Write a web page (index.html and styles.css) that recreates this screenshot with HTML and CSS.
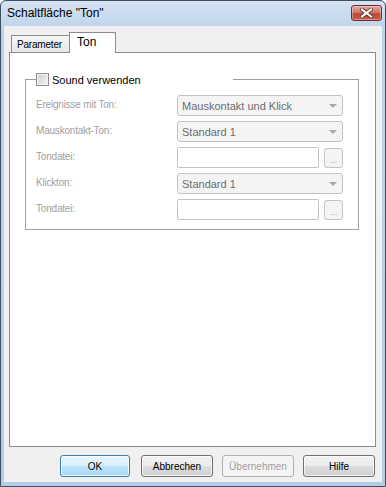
FILE: index.html
```html
<!DOCTYPE html>
<html lang="de">
<head>
    <meta charset="UTF-8">
    <title>Schaltfläche "Ton"</title>
    <link rel="stylesheet" href="styles.css">
</head>
<body>
    <div class="window">
        <div class="titlebar">
            <span class="title">Schaltfläche "Ton"</span>
            <button class="close-btn" type="button">
                <svg width="13" height="10" viewBox="0 0 13 10">
                    <path d="M2 1.5 L11 8.5 M11 1.5 L2 8.5" stroke="#5b3632" stroke-width="4" stroke-linecap="square"/>
                    <path d="M2 1.5 L11 8.5 M11 1.5 L2 8.5" stroke="#ffffff" stroke-width="2.2" stroke-linecap="square"/>
                </svg>
            </button>
        </div>
        <div class="client">
            <div class="tabs">
                <div class="tab">Parameter</div>
                <div class="tab active">Ton</div>
            </div>
            <div class="tab-panel">
                <fieldset class="group">
                    <legend><span class="checkbox"></span>Sound verwenden</legend>
                    <div class="row">
                        <label>Ereignisse mit Ton:</label>
                        <div class="combo">Mauskontakt und Klick<span class="arrow"></span></div>
                    </div>
                    <div class="row">
                        <label>Mauskontakt-Ton:</label>
                        <div class="combo">Standard 1<span class="arrow"></span></div>
                    </div>
                    <div class="row">
                        <label>Tondatei:</label>
                        <div class="file-field">
                            <div class="edit"></div>
                            <button class="browse" type="button">...</button>
                        </div>
                    </div>
                    <div class="row">
                        <label>Klickton:</label>
                        <div class="combo">Standard 1<span class="arrow"></span></div>
                    </div>
                    <div class="row">
                        <label>Tondatei:</label>
                        <div class="file-field">
                            <div class="edit"></div>
                            <button class="browse" type="button">...</button>
                        </div>
                    </div>
                </fieldset>
            </div>
            <div class="button-bar">
                <button class="btn default" type="button">OK</button>
                <button class="btn" type="button">Abbrechen</button>
                <button class="btn" type="button" disabled>Übernehmen</button>
                <button class="btn" type="button">Hilfe</button>
            </div>
        </div>
    </div>
</body>
</html>
```

FILE: styles.css
```css
body {
    margin: 0;
    padding: 0;
    background-color: #ffffff;
    font-family: "Liberation Sans", Arial, sans-serif;
    font-size: 11px;
}

.window {
    box-sizing: border-box;
    width: 386px;
    height: 487px;
    border: 1px solid #3d4d62;
    border-radius: 6px 6px 0 0;
    background: linear-gradient(#d5e3f2, #bcd2ea 30px, #b6cde8);
    display: flex;
    flex-direction: column;
}

/* title bar */
.titlebar {
    height: 25px;
    display: flex;
    align-items: flex-start;
}

.title {
    margin: 5px 0 0 6px;
    font-size: 12px;
    color: #000000;
}

.close-btn {
    margin: 4px 3px 0 auto;
    width: 31px;
    height: 16px;
    padding: 0;
    border: 1px solid #6e2d2a;
    border-radius: 3px;
    background: linear-gradient(#e4a89f, #d3786c 45%, #c2483a 55%, #c75a48);
    box-shadow: inset 0 0 0 1px rgba(255, 255, 255, 0.35);
    display: flex;
    align-items: center;
    justify-content: center;
}

/* client area */
.client {
    flex: 1;
    margin: 0 3px 4px 3px;
    background-color: #f0f0f0;
    padding: 6px 6px 0 5px;
    display: flex;
    flex-direction: column;
}

.tabs {
    height: 21px;
    margin-bottom: -1px;
    padding-left: 2px;
    display: flex;
    align-items: flex-end;
    position: relative;
    z-index: 1;
}

.tab {
    box-sizing: border-box;
    height: 18px;
    width: 59px;
    padding: 3px 0 0 5px;
    border: 1px solid #898c95;
    background: linear-gradient(#f6f6f6, #e8e8e8);
    color: #000000;
    font-size: 10px;
    letter-spacing: -0.2px;
}

.tab.active {
    height: 21px;
    width: 47px;
    margin-left: -1px;
    padding: 2px 0 0 7px;
    border-bottom: none;
    background: #ffffff;
    font-size: 12px;
    letter-spacing: 0;
}

.tab-panel {
    box-sizing: border-box;
    height: 395px;
    border: 1px solid #898c95;
    background-color: #ffffff;
    padding: 20px 16px 0 15px;
}

/* group box */
.group {
    margin: 0;
    padding: 9px 15px 9px 10px;
    border: 1px solid #a0a0a0;
    display: grid;
    grid-template-columns: 141px 1fr;
    grid-auto-rows: 21px;
    row-gap: 5px;
}

.group legend {
    width: 197px;
    padding: 0;
    height: 13px;
    display: flex;
    align-items: center;
    color: #000000;
}

.checkbox {
    box-sizing: border-box;
    width: 13px;
    height: 13px;
    margin-right: 3px;
    border: 1px solid #8f8f8f;
    background: linear-gradient(135deg, #cbcfd5, #f3f3f3);
    box-shadow: inset 0 0 0 1px #f4f4f4;
}

.row {
    display: contents;
}

.row label {
    color: #a0a0a0;
    font-size: 10px;
    letter-spacing: -0.2px;
    align-self: center;
    padding-bottom: 2px;
}

.combo {
    box-sizing: border-box;
    height: 21px;
    border: 1px solid #c3c3c3;
    border-radius: 3px;
    background-color: #f4f4f4;
    color: #6d6d6d;
    padding-left: 4px;
    display: flex;
    align-items: center;
}

.arrow {
    margin-left: auto;
    margin-right: 5px;
    width: 0;
    height: 0;
    border-left: 4px solid transparent;
    border-right: 4px solid transparent;
    border-top: 4px solid #a8a8a8;
}

.file-field {
    display: flex;
    align-items: center;
    gap: 5px;
}

.edit {
    box-sizing: border-box;
    flex: 1;
    height: 21px;
    border: 1px solid #c3c3c3;
    border-radius: 2px;
    background-color: #ffffff;
}

.browse {
    box-sizing: border-box;
    width: 19px;
    height: 20px;
    padding: 6px 0 0 0;
    border: 1px solid #c3c3c3;
    border-radius: 3px;
    background-color: #f4f4f4;
    color: #a0a0a0;
    font-family: "Liberation Sans", Arial, sans-serif;
    font-size: 9px;
    line-height: 9px;
}

/* dialog buttons */
.button-bar {
    margin-top: 8px;
    height: 22px;
    display: flex;
    justify-content: flex-end;
    gap: 9px;
    padding-right: 1px;
}

.btn {
    box-sizing: border-box;
    width: 72px;
    height: 22px;
    padding: 0;
    border: 1px solid #707070;
    border-radius: 3px;
    background: linear-gradient(#f2f2f2, #ebebeb 50%, #dddddd 50%, #cfcfcf);
    box-shadow: inset 0 0 0 1px rgba(255, 255, 255, 0.7);
    font-family: "Liberation Sans", Arial, sans-serif;
    font-size: 10px;
    color: #000000;
}

.btn.default {
    width: 70px;
    margin-right: 2px;
    border-color: #3c7fb1;
    background: linear-gradient(#eaf6fd, #d9f0fc 50%, #bee6fd 50%, #a7d9f5);
}

.btn:disabled {
    border-color: #adb2b5;
    background: #f4f4f4;
    box-shadow: none;
    color: #a0a0a0;
}
```
